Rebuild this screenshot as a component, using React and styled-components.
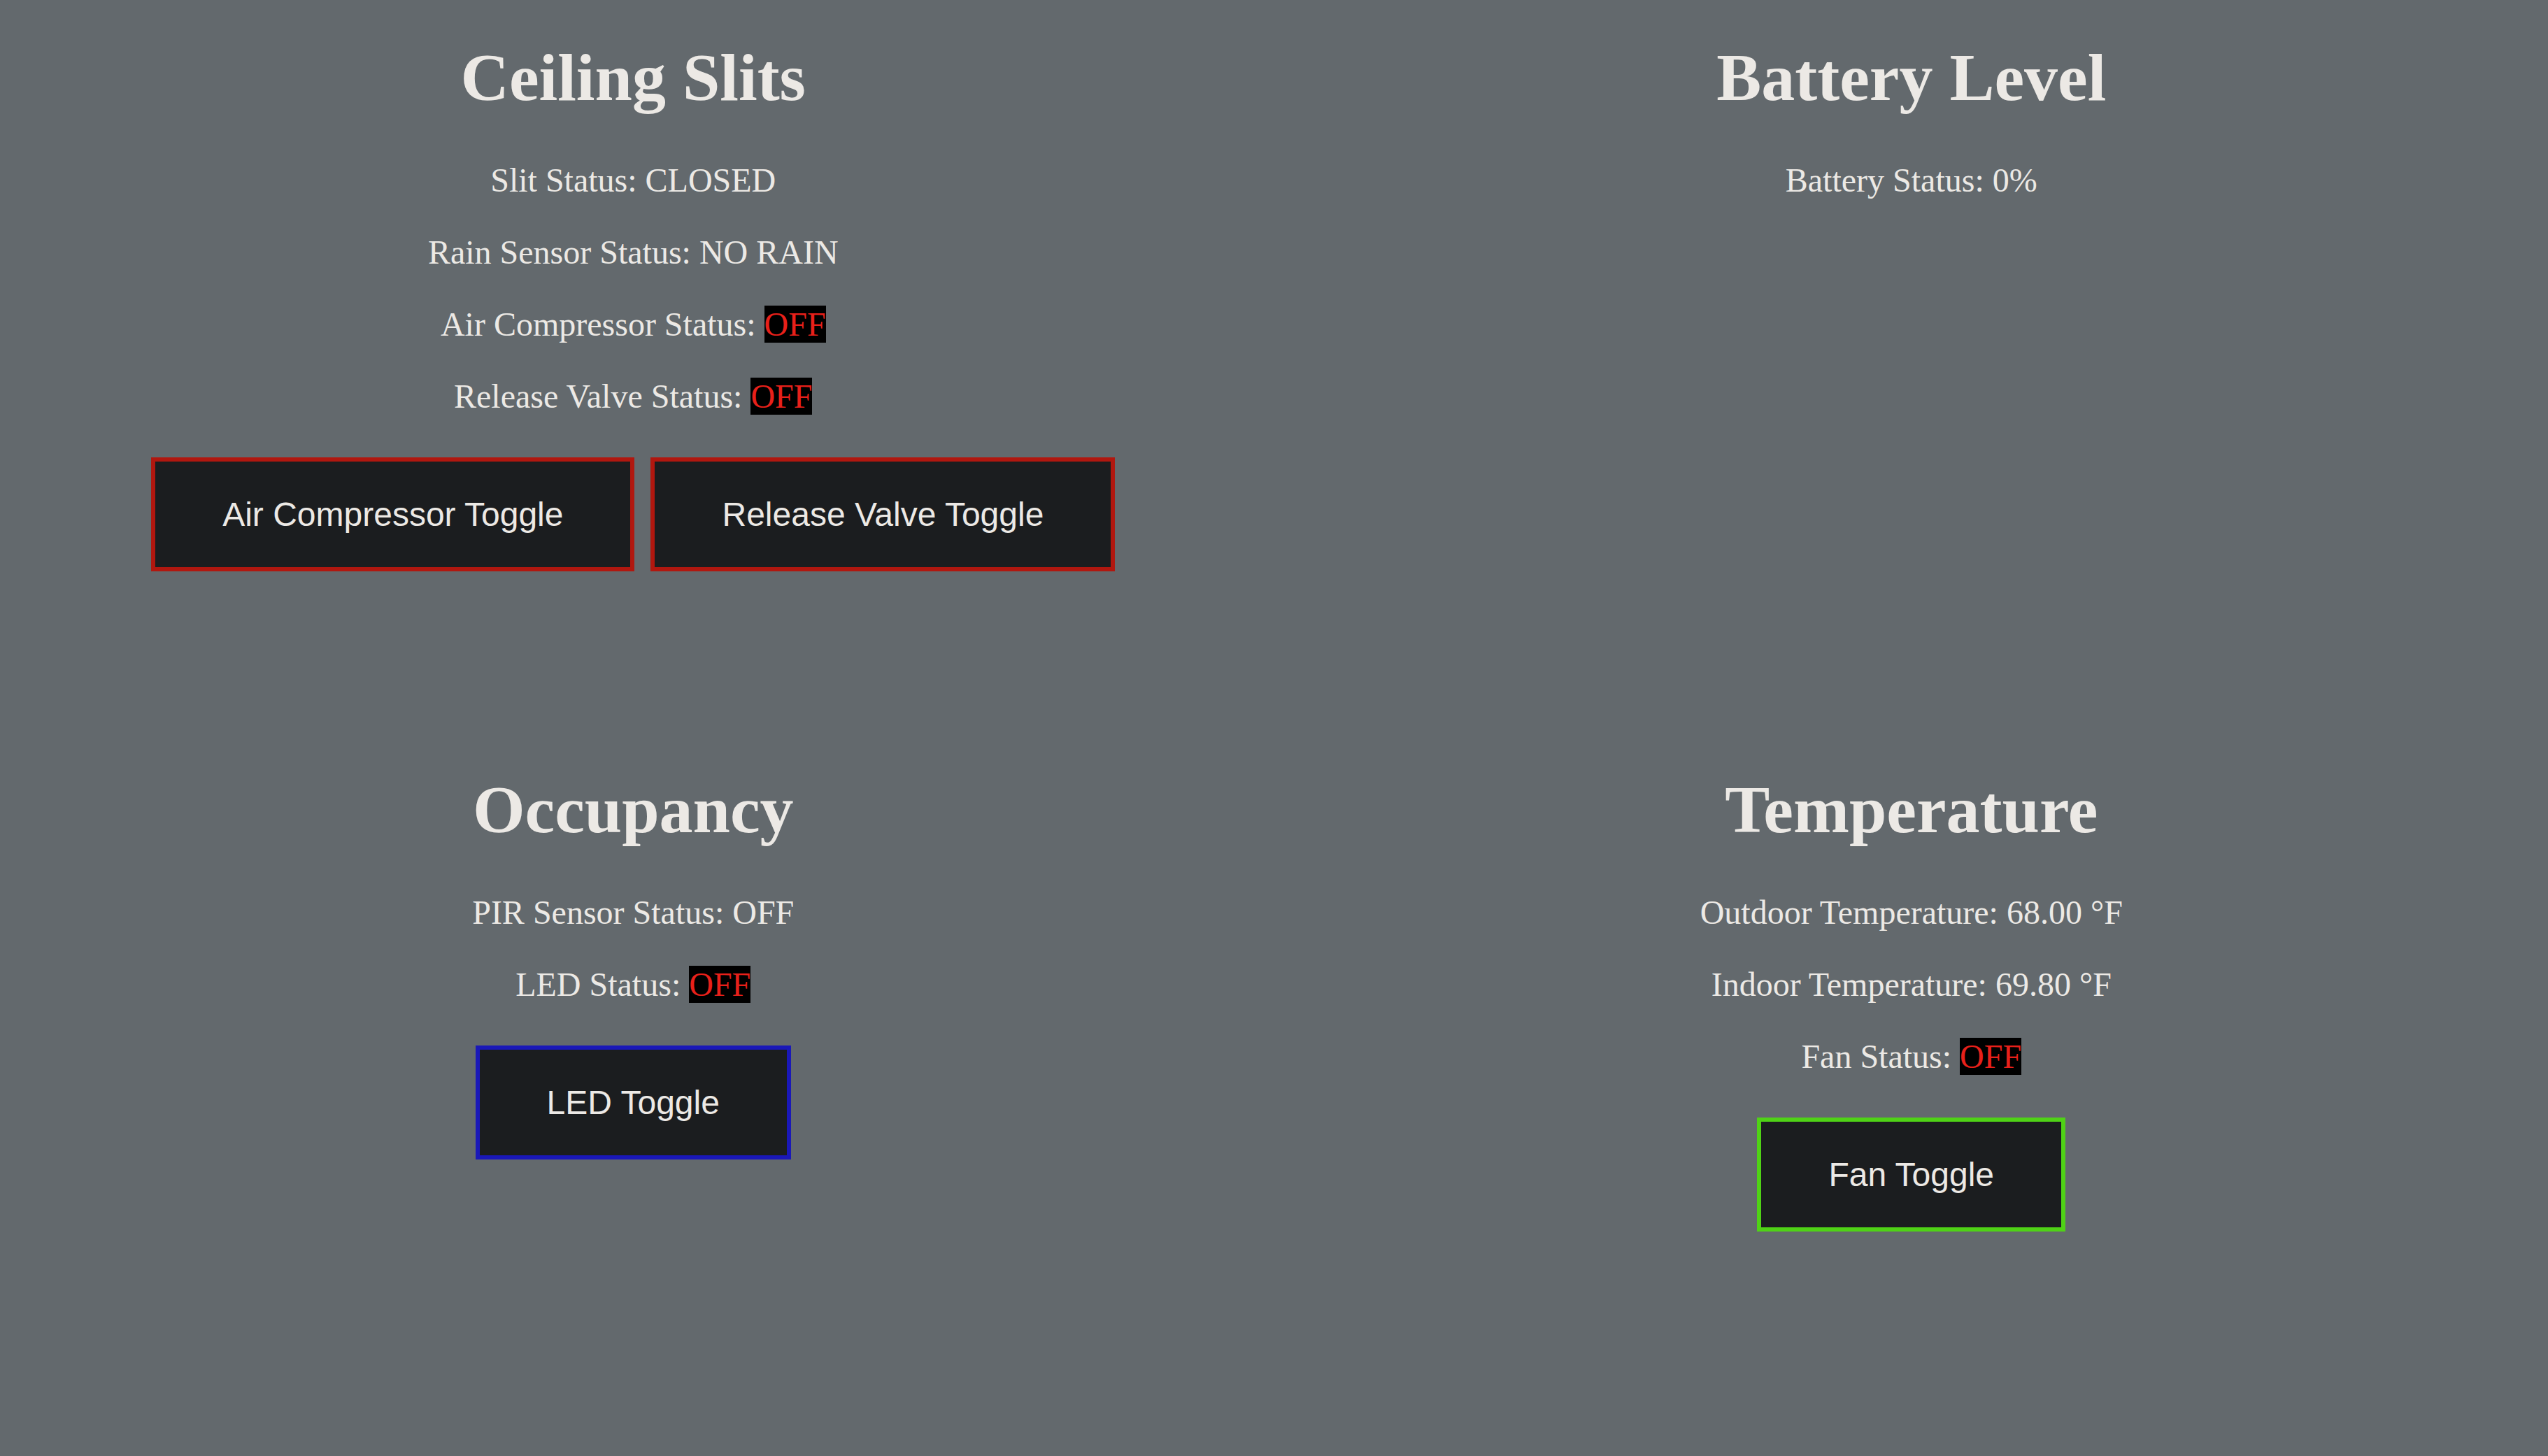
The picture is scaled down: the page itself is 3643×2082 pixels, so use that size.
import styled, { createGlobalStyle } from "styled-components";

const Global = createGlobalStyle`
    html, body {
        margin : 0;
        padding : 0;
        background-color : #63696d;
    }
    body {
        font-family : "Liberation Serif", "Times New Roman", serif;
        color : #ece9e5;
    }
`;

const Dashboard = styled.div`
    display : grid;
    grid-template-columns : 1fr 1fr;
    grid-template-rows : 1fr 1fr;
    gap : 12px;
    height : 100vh;
`;

const Section = styled.section`
    text-align : center;
    padding-right : 5px;
    overflow : hidden;
`;

const Title = styled.h1`
    font-size : 96px;
    font-weight : bold;
    margin : 55px 0 64px;
`;

const Line = styled.p`
    font-size : 48px;
    margin : 48px 0;
`;

const Off = styled.span`
    background-color : #000;
    color : #e8201a;
`;

const ButtonRow = styled.div`
    display : flex;
    justify-content : center;
    gap : 23px;
    margin-top : 60px;
`;

const ToggleButton = styled.button`
    font-family : "Liberation Sans", Arial, sans-serif;
    font-size : 48px;
    line-height : normal;
    padding : 48px 96px;
    background-color : #1b1d1f;
    color : #ece9e5;
    border : 6px solid ${props => props.$border};
    cursor : pointer;
`;

const App = () => {
  return (
    <>
      <Global />
      <Dashboard>
        <Section>
          <Title>Ceiling Slits</Title>
          <Line>Slit Status: CLOSED</Line>
          <Line>Rain Sensor Status: NO RAIN</Line>
          <Line>Air Compressor Status: <Off>OFF</Off></Line>
          <Line>Release Valve Status: <Off>OFF</Off></Line>
          <ButtonRow>
            <ToggleButton $border="#b1170f">Air Compressor Toggle</ToggleButton>
            <ToggleButton $border="#b1170f">Release Valve Toggle</ToggleButton>
          </ButtonRow>
        </Section>
        <Section>
          <Title>Battery Level</Title>
          <Line>Battery Status: 0%</Line>
        </Section>
        <Section>
          <Title>Occupancy</Title>
          <Line>PIR Sensor Status: OFF</Line>
          <Line>LED Status: <Off>OFF</Off></Line>
          <ButtonRow>
            <ToggleButton $border="#1a18b8">LED Toggle</ToggleButton>
          </ButtonRow>
        </Section>
        <Section>
          <Title>Temperature</Title>
          <Line>Outdoor Temperature: 68.00 °F</Line>
          <Line>Indoor Temperature: 69.80 °F</Line>
          <Line>Fan Status: <Off>OFF</Off></Line>
          <ButtonRow>
            <ToggleButton $border="#4fd216">Fan Toggle</ToggleButton>
          </ButtonRow>
        </Section>
      </Dashboard>
    </>
  )
}

export default App
